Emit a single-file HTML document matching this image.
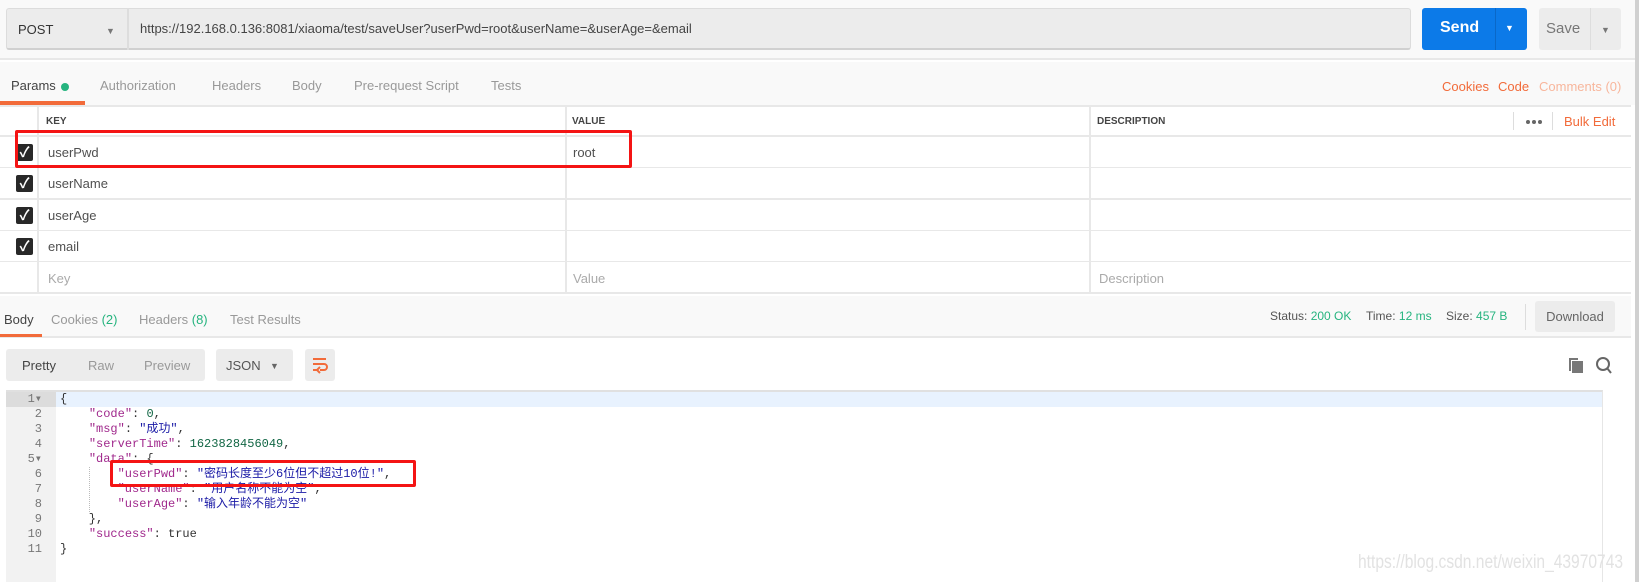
<!DOCTYPE html>
<html><head><meta charset="utf-8"><style>
*{box-sizing:border-box;margin:0;padding:0}
body{width:1639px;height:582px;overflow:hidden;background:#fff;font-family:"Liberation Sans","Noto Sans CJK SC",sans-serif;position:relative;color:#505050}
.a{position:absolute}
.t{font-size:13px;white-space:nowrap}
.row{position:absolute;left:0;width:1631px;height:32px;border-bottom:2px solid #e8e8e8;background:#fff}
.cb{position:absolute;left:16px;width:17px;height:17px;background:#282828;border-radius:2px;color:#fff;font-size:14px;line-height:17px;text-align:center;font-weight:bold}
.vl{position:absolute;top:0;bottom:0;width:2px;background:#e8e8e8}
.code{font-family:"Liberation Mono","Noto Sans CJK SC",monospace;font-size:12px;line-height:15px;white-space:pre}
.ln{position:absolute;left:6px;width:36px;text-align:right;color:#777}
.k{color:#a0288c}.s{color:#1a1aa6}.n{color:#164}
</style></head><body>
<div class="a" style="left:0;top:0;width:1639px;height:60px;background:#f9f9f9;border-bottom:2px solid #e8e8e8"></div>
<div class="a" style="left:6px;top:8px;width:1405px;height:42px;background:#ececec;border:1px solid #dcdcdc;border-bottom:2px solid #d0d0d0;border-radius:3px"></div>
<div class="a" style="left:127px;top:8px;width:2px;height:42px;background:#ddd"></div>
<div class="a t" style="left:18px;top:22px;color:#333">POST</div>
<div class="a" style="left:106px;top:26px;font-size:9px;color:#777">▼</div>
<div class="a t" style="left:140px;top:21px;color:#444">https://192.168.0.136:8081/xiaoma/test/saveUser?userPwd=root&amp;userName=&amp;userAge=&amp;email</div>
<div class="a" style="left:1422px;top:8px;width:105px;height:42px;background:#0c7ae8;border-radius:3px"></div>
<div class="a" style="left:1495px;top:8px;width:1px;height:42px;background:#0a68c8"></div>
<div class="a" style="left:1440px;top:19px;color:#fff;font-size:16px;font-weight:bold">Send</div>
<div class="a" style="left:1505px;top:23px;color:#fff;font-size:9px">▼</div>
<div class="a" style="left:1539px;top:8px;width:82px;height:42px;background:#ececec;border-radius:3px"></div>
<div class="a" style="left:1590px;top:8px;width:1px;height:42px;background:#ddd"></div>
<div class="a" style="left:1546px;top:20px;color:#777;font-size:15px">Save</div>
<div class="a" style="left:1601px;top:25px;color:#777;font-size:9px">▼</div>

<div class="a" style="left:0;top:62px;width:1639px;height:43px;background:#f9f9f9"></div>
<div class="a t" style="left:11px;top:78px;color:#444">Params</div>
<div class="a" style="left:61px;top:83px;width:8px;height:8px;border-radius:50%;background:#26b47f"></div>
<div class="a" style="left:0;top:101px;width:85px;height:4px;background:#f26b3a"></div>
<div class="a t" style="left:100px;top:78px;color:#999">Authorization</div>
<div class="a t" style="left:212px;top:78px;color:#999">Headers</div>
<div class="a t" style="left:292px;top:78px;color:#999">Body</div>
<div class="a t" style="left:354px;top:78px;color:#999">Pre-request Script</div>
<div class="a t" style="left:491px;top:78px;color:#999">Tests</div>
<div class="a t" style="left:1442px;top:79px;color:#f26b3a">Cookies</div>
<div class="a t" style="left:1498px;top:79px;color:#f26b3a">Code</div>
<div class="a t" style="left:1539px;top:79px;color:#f8b69c">Comments (0)</div>

<div class="row" style="top:105px;height:32px;border-top:2px solid #e8e8e8">
<div class="vl" style="left:37px"></div><div class="vl" style="left:565px"></div><div class="vl" style="left:1089px"></div>
<div class="a" style="left:46px;top:9px;font-size:10px;font-weight:bold;color:#444">KEY</div>
<div class="a" style="left:572px;top:9px;font-size:10px;font-weight:bold;color:#444">VALUE</div>
<div class="a" style="left:1097px;top:9px;font-size:10px;font-weight:bold;color:#444">DESCRIPTION</div>
<div class="a" style="left:1513px;top:5px;width:1px;height:18px;background:#ddd"></div>
<div class="a" style="left:1526px;top:13px;width:4px;height:4px;border-radius:50%;background:#666;box-shadow:6px 0 #666,12px 0 #666"></div>
<div class="a" style="left:1552px;top:5px;width:1px;height:18px;background:#ddd"></div>
<div class="a t" style="left:1564px;top:7px;color:#f26b3a">Bulk Edit</div>
</div>
<div class="row" style="top:137px"><div class="vl" style="left:37px"></div><div class="vl" style="left:565px"></div><div class="vl" style="left:1089px"></div><div class="cb" style="top:7px">✓</div><div class="a t" style="left:48px;top:8px">userPwd</div><div class="a t" style="left:573px;top:8px">root</div></div>
<div class="row" style="top:168px"><div class="vl" style="left:37px"></div><div class="vl" style="left:565px"></div><div class="vl" style="left:1089px"></div><div class="cb" style="top:7px">✓</div><div class="a t" style="left:48px;top:8px">userName</div></div>
<div class="row" style="top:200px"><div class="vl" style="left:37px"></div><div class="vl" style="left:565px"></div><div class="vl" style="left:1089px"></div><div class="cb" style="top:7px">✓</div><div class="a t" style="left:48px;top:8px">userAge</div></div>
<div class="row" style="top:231px"><div class="vl" style="left:37px"></div><div class="vl" style="left:565px"></div><div class="vl" style="left:1089px"></div><div class="cb" style="top:7px">✓</div><div class="a t" style="left:48px;top:8px">email</div></div>
<div class="row" style="top:262px"><div class="vl" style="left:37px"></div><div class="vl" style="left:565px"></div><div class="vl" style="left:1089px"></div><div class="a t" style="left:48px;top:9px;color:#aaa">Key</div><div class="a t" style="left:573px;top:9px;color:#aaa">Value</div><div class="a t" style="left:1099px;top:9px;color:#aaa">Description</div></div>
<div class="a" style="left:15px;top:130px;width:617px;height:38px;border:3px solid #f41414;border-radius:2px"></div>

<div class="a" style="left:0;top:296px;width:1631px;height:42px;background:#f9f9f9;border-bottom:2px solid #e8e8e8"></div>
<div class="a t" style="left:4px;top:312px;color:#444">Body</div>
<div class="a" style="left:0;top:334px;width:42px;height:3px;background:#f26b3a"></div>
<div class="a t" style="left:51px;top:312px;color:#999">Cookies <span style="color:#26b47f">(2)</span></div>
<div class="a t" style="left:139px;top:312px;color:#999">Headers <span style="color:#26b47f">(8)</span></div>
<div class="a t" style="left:230px;top:312px;color:#999">Test Results</div>
<div class="a" style="left:1270px;top:309px;font-size:12px;color:#555">Status: <span style="color:#26b47f">200 OK</span></div>
<div class="a" style="left:1366px;top:309px;font-size:12px;color:#555">Time: <span style="color:#26b47f">12 ms</span></div>
<div class="a" style="left:1446px;top:309px;font-size:12px;color:#555">Size: <span style="color:#26b47f">457 B</span></div>
<div class="a" style="left:1525px;top:304px;width:1px;height:26px;background:#ddd"></div>
<div class="a" style="left:1535px;top:301px;width:80px;height:31px;background:#ececec;border-radius:3px;color:#666;font-size:13px;text-align:center;line-height:31px">Download</div>

<div class="a" style="left:6px;top:349px;width:199px;height:32px;background:#ececec;border-radius:3px"></div>
<div class="a t" style="left:22px;top:358px;color:#444">Pretty</div>
<div class="a t" style="left:88px;top:358px;color:#999">Raw</div>
<div class="a t" style="left:144px;top:358px;color:#999">Preview</div>
<div class="a" style="left:216px;top:349px;width:77px;height:32px;background:#ececec;border-radius:3px"></div>
<div class="a t" style="left:226px;top:358px;color:#555">JSON</div>
<div class="a" style="left:270px;top:361px;font-size:9px;color:#666">▼</div>
<div class="a" style="left:305px;top:349px;width:30px;height:32px;background:#ececec;border-radius:3px"></div>
<svg class="a" style="left:311px;top:356px" width="18" height="18" viewBox="0 0 18 18"><path d="M2 3h13M2 8h11a3 3 0 0 1 0 6h-4M2 14h4" stroke="#f26b3a" stroke-width="2" fill="none"/><path d="M9 11l-3 3 3 3" stroke="#f26b3a" stroke-width="2" fill="none"/></svg>
<svg class="a" style="left:1567px;top:356px" width="18" height="18" viewBox="0 0 18 18"><path d="M2 2h9v2H4v11H2z" fill="#777"/><rect x="5" y="5" width="11" height="12" fill="#777"/></svg>
<svg class="a" style="left:1595px;top:356px" width="18" height="19" viewBox="0 0 18 19"><circle cx="8" cy="8" r="6" stroke="#666" stroke-width="2" fill="none"/><path d="M12 12l4 5" stroke="#666" stroke-width="2"/></svg>

<div class="a" style="left:6px;top:390px;width:1597px;height:192px;border-top:2px solid #e0e0e0;border-right:1px solid #e6e6e6"></div>
<div class="a" style="left:6px;top:392px;width:50px;height:190px;background:#f2f2f2"></div>
<div class="a" style="left:56px;top:392px;width:1546px;height:15px;background:#e8f2fe"></div>
<div class="a" style="left:6px;top:392px;width:50px;height:15px;background:#dcdcdc"></div>
<div class="a code" style="left:0;top:392px;width:60px">
<div class="ln" style="top:0">1▾</div><div class="ln" style="top:15px">2</div><div class="ln" style="top:30px">3</div><div class="ln" style="top:45px">4</div><div class="ln" style="top:60px">5▾</div><div class="ln" style="top:75px">6</div><div class="ln" style="top:90px">7</div><div class="ln" style="top:105px">8</div><div class="ln" style="top:120px">9</div><div class="ln" style="top:135px">10</div><div class="ln" style="top:150px">11</div>
</div>
<div class="a" style="left:89px;top:467px;width:0;height:45px;border-left:1px dotted #bbb"></div>
<div class="a code" style="left:60px;top:392px;color:#333">{
    <span class="k">"code"</span>: <span class="n">0</span>,
    <span class="k">"msg"</span>: <span class="s">"成功"</span>,
    <span class="k">"serverTime"</span>: <span class="n">1623828456049</span>,
    <span class="k">"data"</span>: {
        <span class="k">"userPwd"</span>: <span class="s">"密码长度至少6位但不超过10位!"</span>,
        <span class="k">"userName"</span>: <span class="s">"用户名称不能为空"</span>,
        <span class="k">"userAge"</span>: <span class="s">"输入年龄不能为空"</span>
    },
    <span class="k">"success"</span>: true
}</div>
<div class="a" style="left:110px;top:460px;width:306px;height:27px;border:3px solid #f41414;border-radius:2px"></div>
<div class="a" style="left:1358px;top:552px;font-size:19px;color:#e2e2e2;white-space:nowrap;transform:scaleX(0.82);transform-origin:left">https://blog.csdn.net/weixin_43970743</div>
<div class="a" style="left:1635px;top:0;width:4px;height:582px;background:#d0d0d0"></div>
</body></html>
